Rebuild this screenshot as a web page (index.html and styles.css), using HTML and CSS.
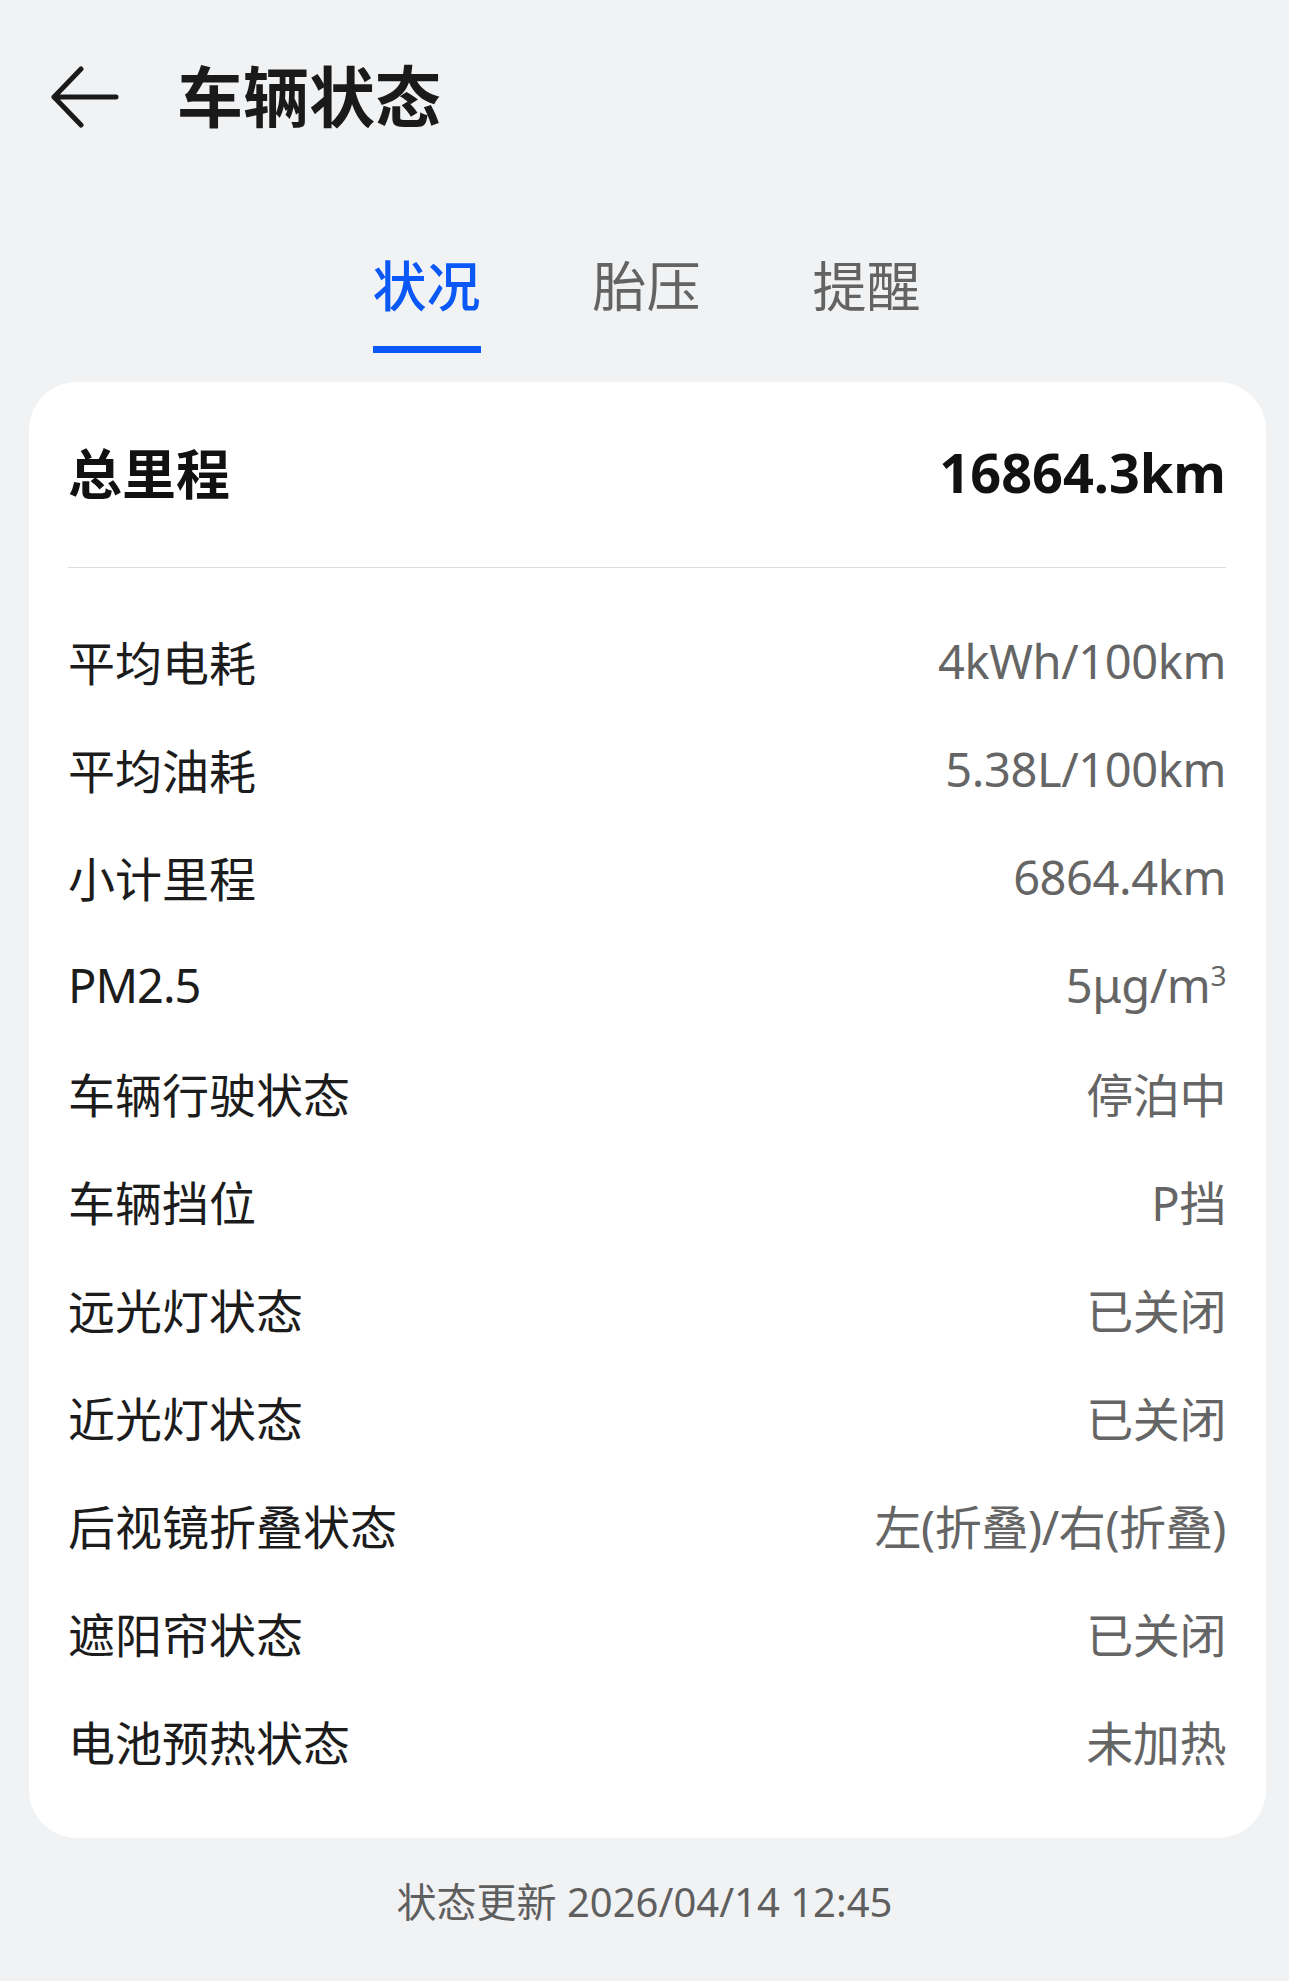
FILE: index.html
```html
<!DOCTYPE html>
<html lang="zh-CN">
<head>
  <meta charset="UTF-8">
  <title>车辆状态</title>
  <link rel="stylesheet" href="styles.css">
</head>
<body>

  <!-- en-tête -->
  <div class="entete">
    <svg class="retour" width="68" height="62" viewBox="0 0 68 62">
      <path d="M30 3 L3 31 L30 59 M3 31 H65" fill="none" stroke="#1a1a1a" stroke-width="5" stroke-linecap="round" stroke-linejoin="round"/>
    </svg>
    <h1>车辆状态</h1>
  </div>

  <!-- onglets -->
  <div class="onglets">
    <div class="onglet actif">状况</div>
    <div class="onglet">胎压</div>
    <div class="onglet">提醒</div>
  </div>

  <!-- carte -->
  <div class="carte">
    <div class="total">
      <span>总里程</span>
      <span class="total-valeur">16864.3km</span>
    </div>
    <div class="liste">
      <div class="ligne"><span>平均电耗</span><span class="valeur">4kWh/100km</span></div>
      <div class="ligne"><span>平均油耗</span><span class="valeur">5.38L/100km</span></div>
      <div class="ligne"><span>小计里程</span><span class="valeur">6864.4km</span></div>
      <div class="ligne"><span class="latin">PM2.5</span><span class="valeur">5μg/m<sup>3</sup></span></div>
      <div class="ligne"><span>车辆行驶状态</span><span class="valeur">停泊中</span></div>
      <div class="ligne"><span>车辆挡位</span><span class="valeur">P挡</span></div>
      <div class="ligne"><span>远光灯状态</span><span class="valeur">已关闭</span></div>
      <div class="ligne"><span>近光灯状态</span><span class="valeur">已关闭</span></div>
      <div class="ligne"><span>后视镜折叠状态</span><span class="valeur">左(折叠)/右(折叠)</span></div>
      <div class="ligne"><span>遮阳帘状态</span><span class="valeur">已关闭</span></div>
      <div class="ligne"><span>电池预热状态</span><span class="valeur">未加热</span></div>
    </div>
  </div>

  <p class="maj">状态更新 2026/04/14 12:45</p>

</body>
</html>
```

FILE: styles.css
```css
body {
  background-color: #f1f2f4;
  color: #1a1a1a;
  font-family: "Noto Sans", "Noto Sans CJK SC", sans-serif;
  margin: 0;
  padding: 0;
}

.entete {
  display: flex;
  align-items: center;
  height: 194px;
  padding-left: 51px;
}

.retour {
  margin-right: 58px;
}

.entete h1 {
  margin: 0;
  font-size: 66px;
  font-weight: bold;
  line-height: 1.2;
}

.onglets {
  display: flex;
  justify-content: center;
  gap: 112px;
  padding-top: 60px;
  padding-left: 4px;
}

.onglet {
  font-size: 54px;
  line-height: 1.2;
  color: #636363;
  padding-bottom: 27px;
  border-bottom: 7px solid transparent;
}

.onglet.actif {
  color: #0a59f7;
  font-weight: 500;
  border-bottom-color: #0a59f7;
}

.carte {
  background-color: white;
  border-radius: 48px;
  margin: 29px 23px 0 29px;
  padding: 35px 40px 43px 39px;
}

.total {
  display: flex;
  justify-content: space-between;
  align-items: center;
  height: 110px;
  font-size: 54px;
  font-weight: bold;
  color: #111;
  padding-bottom: 40px;
  border-bottom: 1px solid #dcdcdc;
}

.liste {
  padding-top: 39px;
}

.ligne {
  display: flex;
  justify-content: space-between;
  align-items: center;
  height: 108px;
  font-size: 47px;
  color: #1c1c1c;
}

.latin {
  letter-spacing: -1px;
}

.valeur {
  color: #656565;
  letter-spacing: -0.4px;
}

.valeur sup {
  font-size: 28px;
  line-height: 0;
}

.maj {
  text-align: center;
  font-size: 40px;
  line-height: 1.3;
  color: #5f5f5f;
  margin: 38px 0 0;
}
```
